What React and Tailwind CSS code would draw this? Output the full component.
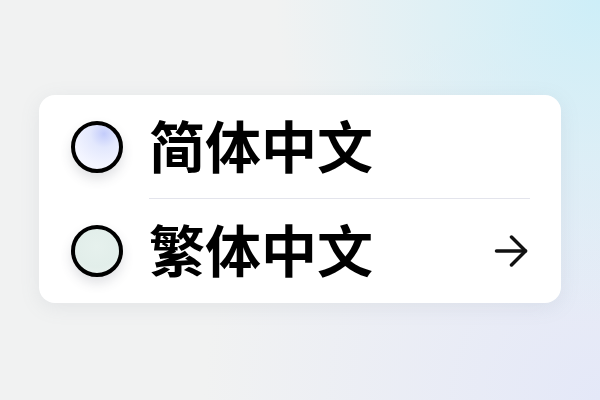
import React from 'react';

const Radio = ({ tint }) => (
  <div
    className={`w-[52px] h-[52px] shrink-0 rounded-full border-[4px] border-black shadow-[0_6px_12px_rgba(60,70,90,0.16)] ${tint}`}
  />
);

const Arrow = () => (
  <svg width="34" height="34" viewBox="0 0 34 34" fill="none" stroke="#111" strokeWidth="3.5" strokeLinecap="round" strokeLinejoin="round">
    <path d="M2.5 17h29" />
    <path d="M17.5 3l14 14-14 14" />
  </svg>
);

export default function App() {
  return (
    <div className="w-[600px] h-[400px] overflow-hidden bg-[#f1f2f2] bg-[radial-gradient(circle_at_100%_0%,#cdeef8_0%,rgba(205,238,248,0)_45%),radial-gradient(circle_at_100%_100%,#e4e8f8_0%,rgba(228,232,248,0)_55%)] pt-[95px] pl-[39px]" style={{ fontFamily: '"Noto Sans CJK SC", "Noto Sans", sans-serif' }}>
      <div className="w-[522px] h-[208px] bg-white rounded-[16px] shadow-[0_4px_20px_rgba(120,130,150,0.12)] flex flex-col pl-[32px] pr-[31px]">
        <div className="flex h-[104px] items-stretch gap-[26px]">
          <div className="flex items-center">
            <Radio tint="bg-[radial-gradient(circle_at_66%_20%,#c3ccfb_0%,#e3e8fd_30%,#f3f5ff_70%,#f6f7ff_100%)]" />
          </div>
          <div className="flex-1 flex items-center border-b border-[#e3e4ec]">
            <span className="text-[56px] leading-none font-bold text-black mb-[6px]">简体中文</span>
          </div>
        </div>
        <div className="flex h-[104px] items-stretch gap-[26px]">
          <div className="flex items-center">
            <Radio tint="bg-[radial-gradient(circle_at_50%_40%,#e6f1ed_0%,#e2eeea_60%,#eef4f2_100%)]" />
          </div>
          <div className="flex-1 flex items-center justify-between pr-[2px]">
            <span className="text-[56px] leading-none font-bold text-black mb-[6px]">繁体中文</span>
            <Arrow />
          </div>
        </div>
      </div>
    </div>
  );
}
